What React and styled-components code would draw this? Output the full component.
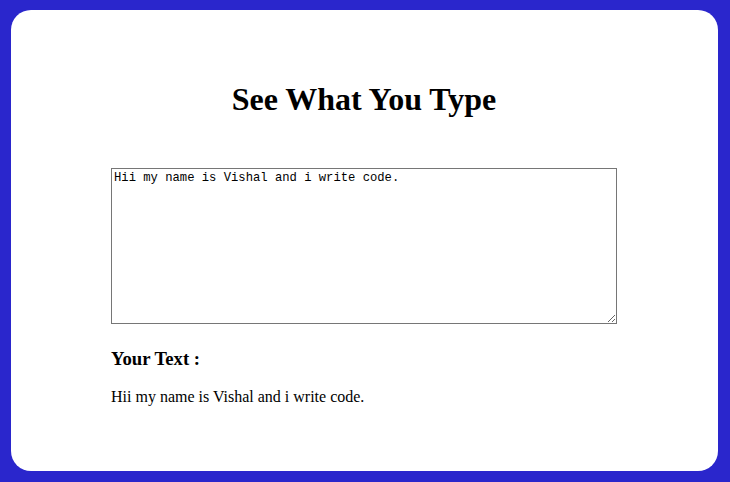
import React, { useState } from "react";
import styled, { createGlobalStyle } from "styled-components";

const GlobalStyle = createGlobalStyle`
  html, body {
    margin: 0;
    padding: 0;
    background: #2a26cc;
  }
  body {
    font-family: "Liberation Serif", "Times New Roman", serif;
  }
`;

const App = () => {
  const [text, setText] = useState("Hii my name is Vishal and i write code.");

  return (
    <>
      <GlobalStyle />
      <Page>
        <Card>
          <Title>See What You Type</Title>
          <TextBox
            value={text}
            onChange={(e) => setText(e.target.value)}
            spellCheck={false}
          />
          <Label>Your Text :</Label>
          <Output>{text}</Output>
        </Card>
      </Page>
    </>
  );
};

const Page = styled.div`
  box-sizing: border-box;
  height: 100vh;
  display: flex;
  padding: 10px 13px 11px 11px;
`;

const Card = styled.div`
  flex: 1;
  display: flex;
  flex-direction: column;
  background: #ffffff;
  border-radius: 20px;
  padding: 50px 101px 0 100px;
  color: #000;
`;

const Title = styled.h1`
  font-size: 32px;
  font-weight: bold;
  text-align: center;
  margin: 21.44px 0 50px 0;
`;

const TextBox = styled.textarea`
  box-sizing: border-box;
  width: 506px;
  height: 156px;
  padding: 2px;
  border: 1px solid #767676;
  font-family: "Liberation Mono", "DejaVu Sans Mono", monospace;
  font-size: 12.2px;
  color: #000;
  margin: 0 0 5px 0;
  outline: none;
`;

const Label = styled.h3`
  font-size: 18.72px;
  font-weight: bold;
  margin: 18.72px 0 17.72px 0;
`;

const Output = styled.p`
  font-size: 16px;
  margin: 0;
`;

export default App;
